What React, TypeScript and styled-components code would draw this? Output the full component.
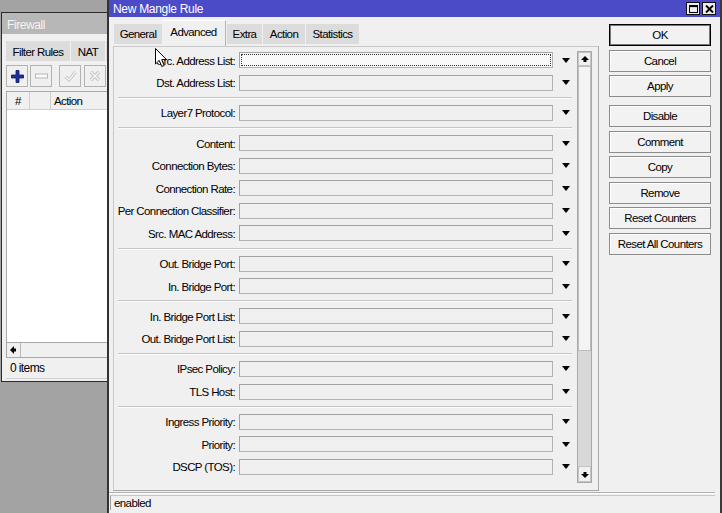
import React from 'react';
import styled, { createGlobalStyle } from 'styled-components';

const GlobalStyle = createGlobalStyle`
  html, body { margin: 0; padding: 0; }
  body {
    width: 722px; height: 513px; overflow: hidden; background: #a3a3a3;
    font-family: "Liberation Sans", Arial, sans-serif;
  }
  #root { width: 722px; height: 513px; }
`;

const Desktop = styled.div`
  position: relative;
  width: 722px;
  height: 513px;
  overflow: hidden;
  background: #a3a3a3;
  font-family: "Liberation Sans", Arial, sans-serif;
  font-size: 11.5px;
  letter-spacing: -0.6px;
  color: #000;
`;

/* ---------- Firewall (background window) ---------- */
const FwWindow = styled.div`
  position: absolute;
  left: 1px;
  top: 12px;
  width: 320px;
  height: 370px;
  box-sizing: border-box;
  border: 1px solid #2b2b2b;
  background: #f0f0f0;
  display: flex;
  flex-direction: column;
`;

const FwTitle = styled.div`
  height: 21px;
  box-sizing: border-box;
  padding: 2px 0 0 5px;
  background: #b7b7b7;
  color: #f4f4f4;
  font-size: 12px;
  letter-spacing: -0.4px;
  display: flex;
  align-items: center;
`;

const FwBody = styled.div`
  flex: 1;
  display: flex;
  flex-direction: column;
  padding: 7px 0 2px 4px;
`;

const FwTabs = styled.div`
  display: flex;
  gap: 1px;
  height: 20px;
`;

const FwTab = styled.div<{ $w: number }>`
  width: ${p => p.$w}px;
  box-sizing: border-box;
  padding-top: 1px;
  background: #dcdcdc;
  display: flex;
  align-items: center;
  justify-content: center;
  white-space: nowrap;
`;

const FwToolbar = styled.div`
  display: flex;
  margin-top: 4px;
  height: 22px;
`;

const ToolBtn = styled.div<{ $gap: number }>`
  width: 22px;
  height: 22px;
  box-sizing: border-box;
  margin-left: ${p => p.$gap}px;
  border: 1px solid #b3b3b3;
  background: #f0f0f0;
  display: flex;
  align-items: center;
  justify-content: center;
`;

const FwTable = styled.div`
  margin-top: 4px;
  flex: 1;
  display: flex;
  flex-direction: column;
  border: 1px solid #a8a8a8;
  border-right: none;
  border-bottom: none;
  background: #fff;
`;

const FwHeader = styled.div`
  height: 17px;
  display: flex;
  background: #f0f0f0;
  border-bottom: 1px solid #cfcfcf;
`;

const HeadCell = styled.div<{ $w?: number; $center?: boolean }>`
  ${p => (p.$w ? `width: ${p.$w}px;` : 'flex: 1;')}
  box-sizing: border-box;
  border-right: 1px solid #cfcfcf;
  display: flex;
  align-items: center;
  justify-content: ${p => (p.$center ? 'center' : 'flex-start')};
  padding-left: ${p => (p.$center ? 0 : 3)}px;
`;

const FwRows = styled.div`
  flex: 1;
  background: #fff;
`;

const HScroll = styled.div`
  height: 14px;
  display: flex;
  background: #f0f0f0;
  border-top: 1px solid #a8a8a8;
  border-bottom: 1px solid #a8a8a8;
`;

const HScrollBtn = styled.div`
  width: 14px;
  box-sizing: border-box;
  border-right: 1px solid #b8b8b8;
  display: flex;
  align-items: center;
  justify-content: center;
`;

const FwStatus = styled.div`
  height: 20px;
  display: flex;
  align-items: center;
  padding-left: 4px;
  font-size: 12px;
  border-bottom: 1px solid #d0d0d0;
`;

/* ---------- New Mangle Rule (front window) ---------- */
const MWindow = styled.div`
  position: absolute;
  left: 107px;
  top: 0;
  width: 615px;
  height: 513px;
  box-sizing: border-box;
  border-left: 2px solid #333;
  border-right: 2px solid #3a3a3a;
  background: #f0f0f0;
  display: flex;
  flex-direction: column;
  z-index: 2;
`;

const TitleBar = styled.div`
  height: 17px;
  flex: none;
  background: #4b4bc8;
  color: #fff;
  font-size: 12px;
  letter-spacing: -0.3px;
  display: flex;
  align-items: center;
  justify-content: space-between;
  padding-left: 4px;
`;

const TitleControls = styled.div`
  display: flex;
  gap: 2px;
  margin-right: 4px;
`;

const TitleCtl = styled.div`
  width: 14px;
  height: 13px;
  box-sizing: border-box;
  border: 1px solid #111;
  background: #ececec;
  display: flex;
  align-items: center;
  justify-content: center;
`;

const Body = styled.div`
  flex: 1;
  display: flex;
  gap: 10px;
  padding: 3px 9px 1px 4px;
  min-height: 0;
`;

const LeftCol = styled.div`
  width: 486px;
  display: flex;
  flex-direction: column;
`;

const TabBar = styled.div`
  height: 26px;
  flex: none;
  display: flex;
  align-items: flex-end;
  padding-left: 1px;
`;

const Tab = styled.div<{ $w: number; $active?: boolean }>`
  width: ${p => p.$w}px;
  box-sizing: border-box;
  margin-left: ${p => (p.$active ? 0 : 1)}px;
  height: ${p => (p.$active ? 26 : 20)}px;
  margin-bottom: ${p => (p.$active ? 0 : 2)}px;
  background: ${p => (p.$active ? '#f0f0f0' : '#dcdcdc')};
  border-top: ${p => (p.$active ? '1px solid #ffffff' : 'none')};
  border-right: ${p => (p.$active ? '1px solid #b4b4b4' : 'none')};
  display: flex;
  align-items: center;
  justify-content: center;
  padding-bottom: ${p => (p.$active ? 4 : 0)}px;
  white-space: nowrap;
  &:first-child { margin-left: 0; }
`;

const Panel = styled.div`
  flex: 1;
  display: flex;
  box-sizing: border-box;
  border: 1px solid #c9c9c9;
  border-right-color: #a7a7a7;
  border-bottom-color: #a7a7a7;
`;

const Form = styled.div`
  width: 463px;
  display: flex;
  flex-direction: column;
  padding-top: 2px;
`;

const Row = styled.div`
  height: 22.6px;
  flex: none;
  display: grid;
  grid-template-columns: 125px 314px 24px;
  align-items: center;
`;

const Label = styled.div`
  text-align: right;
  padding-right: 4px;
  padding-top: 1px;
  white-space: nowrap;
`;

const Field = styled.div<{ $focused?: boolean }>`
  height: 16px;
  box-sizing: border-box;
  border: 1px solid #b3b3b3;
  border-top-color: #a3a3a3;
  border-left-color: #a3a3a3;
  background: ${p => (p.$focused ? '#f9f9f9' : '#f0f0f0')};
  ${p => (p.$focused ? 'outline: 1px dotted #333; outline-offset: -3px;' : '')}
`;

const DropArrow = styled.div`
  justify-self: center;
  width: 0;
  height: 0;
  border-left: 4.5px solid transparent;
  border-right: 4.5px solid transparent;
  border-top: 5px solid #000;
  margin-left: 1px;
`;

const Separator = styled.div`
  height: 7.5px;
  flex: none;
  display: flex;
  align-items: center;
  padding: 0 5px 0 4px;
  &::after {
    content: '';
    flex: 1;
    border-top: 1px solid #c6c6c6;
    border-bottom: 1px solid #fbfbfb;
  }
`;

const VScroll = styled.div`
  width: 15px;
  height: 432px;
  margin: 4px 6px 0 0;
  box-sizing: border-box;
  border: 1px solid #a9a9a9;
  display: flex;
  flex-direction: column;
  background: #d6d6d6;
`;

const ScrollBtn = styled.div<{ $h: number }>`
  height: ${p => p.$h}px;
  flex: none;
  box-sizing: border-box;
  background: #f0f0f0;
  border: 1px solid #c4c4c4;
  display: flex;
  align-items: center;
  justify-content: center;
`;

const Thumb = styled.div`
  height: 285px;
  flex: none;
  box-sizing: border-box;
  background: #f4f4f4;
  border: 1px solid #bdbdbd;
`;

const Track = styled.div`
  flex: 1;
  background: #d8d8d8;
`;

const ButtonCol = styled.div`
  width: 102px;
  display: flex;
  flex-direction: column;
  gap: 3.5px;
  padding-top: 4px;
`;

const Btn = styled.div<{ $default?: boolean; $spaced?: boolean }>`
  height: 22px;
  flex: none;
  box-sizing: border-box;
  border: 1px solid ${p => (p.$default ? '#000' : '#8c8c8c')};
  box-shadow: ${p => (p.$default ? 'inset 0 0 0 1px #777' : 'inset 1px 1px 0 #fff')};
  background: #f2f2f2;
  display: flex;
  align-items: center;
  justify-content: center;
  white-space: nowrap;
  margin-top: ${p => (p.$spaced ? 4.5 : 0)}px;
`;

const StatusBar = styled.div`
  height: 21px;
  flex: none;
  box-sizing: border-box;
  margin-right: 5px;
  border-top: 1px solid #b0b0b0;
  box-shadow: inset 0 1px 0 #fdfdfd;
  padding: 2px 0 3px 1px;
  display: flex;
`;

const StatusCell = styled.div`
  flex: 1;
  border-left: 1px solid #9c9c9c;
  border-top: 1px solid #c8c8c8;
  display: flex;
  align-items: center;
  padding-left: 3px;
`;

const Cursor = styled.svg`
  position: absolute;
  left: 155px;
  top: 48px;
  z-index: 10;
`;

type Item = { label: string } | 'sep';

const items: Item[] = [
  { label: 'Src. Address List:' },
  { label: 'Dst. Address List:' },
  'sep',
  { label: 'Layer7 Protocol:' },
  'sep',
  { label: 'Content:' },
  { label: 'Connection Bytes:' },
  { label: 'Connection Rate:' },
  { label: 'Per Connection Classifier:' },
  { label: 'Src. MAC Address:' },
  'sep',
  { label: 'Out. Bridge Port:' },
  { label: 'In. Bridge Port:' },
  'sep',
  { label: 'In. Bridge Port List:' },
  { label: 'Out. Bridge Port List:' },
  'sep',
  { label: 'IPsec Policy:' },
  { label: 'TLS Host:' },
  'sep',
  { label: 'Ingress Priority:' },
  { label: 'Priority:' },
  { label: 'DSCP (TOS):' },
];

const tabs = [
  { name: 'General', w: 48 },
  { name: 'Advanced', w: 64, active: true },
  { name: 'Extra', w: 35 },
  { name: 'Action', w: 42 },
  { name: 'Statistics', w: 53 },
];

const buttons = [
  { name: 'OK', def: true },
  { name: 'Cancel' },
  { name: 'Apply' },
  { name: 'Disable', spaced: true },
  { name: 'Comment' },
  { name: 'Copy' },
  { name: 'Remove' },
  { name: 'Reset Counters' },
  { name: 'Reset All Counters' },
];

const UpArrow = () => (
  <svg width="8" height="7" viewBox="0 0 8 7">
    <path d="M4 0 L8 4 L5.5 4 L5.5 6 L2.5 6 L2.5 4 L0 4 Z" fill="#000" />
  </svg>
);

const DownArrow = () => (
  <svg width="8" height="7" viewBox="0 0 8 7">
    <path d="M4 7 L8 3 L5.5 3 L5.5 1 L2.5 1 L2.5 3 L0 3 Z" fill="#000" />
  </svg>
);

const LeftArrow = () => (
  <svg width="7" height="8" viewBox="0 0 7 8">
    <path d="M0 4 L4 0 L4 2.5 L6 2.5 L6 5.5 L4 5.5 L4 8 Z" fill="#000" />
  </svg>
);

export default function App() {
  return (
    <>
      <GlobalStyle />
      <Desktop>
        <FwWindow>
          <FwTitle>Firewall</FwTitle>
          <FwBody>
            <FwTabs>
              <FwTab $w={64}>Filter Rules</FwTab>
              <FwTab $w={34}>NAT</FwTab>
              <FwTab $w={50}>Mangle</FwTab>
            </FwTabs>
            <FwToolbar>
              <ToolBtn $gap={0}>
                <svg width="13" height="13" viewBox="0 0 13 13">
                  <path d="M5 0.5 H8 V5 H12.5 V8 H8 V12.5 H5 V8 H0.5 V5 H5 Z" fill="#1d2fa6" stroke="#0d1660" strokeWidth="0.8" />
                </svg>
              </ToolBtn>
              <ToolBtn $gap={2}>
                <svg width="13" height="6" viewBox="0 0 13 6">
                  <rect x="0.5" y="1" width="12" height="4" fill="#fafafa" stroke="#b6b6b6" />
                </svg>
              </ToolBtn>
              <ToolBtn $gap={7}>
                <svg width="13" height="12" viewBox="0 0 13 12">
                  <path d="M1.5 6.5 L5 10 L11.5 2" fill="none" stroke="#c2c2c2" strokeWidth="3" />
                  <path d="M1.5 6.5 L5 10 L11.5 2" fill="none" stroke="#f6f6f6" strokeWidth="1.2" />
                </svg>
              </ToolBtn>
              <ToolBtn $gap={3}>
                <svg width="12" height="12" viewBox="0 0 12 12">
                  <path d="M2 2 L10 10 M10 2 L2 10" fill="none" stroke="#c2c2c2" strokeWidth="3.4" />
                  <path d="M2 2 L10 10 M10 2 L2 10" fill="none" stroke="#f6f6f6" strokeWidth="1.4" />
                </svg>
              </ToolBtn>
            </FwToolbar>
            <FwTable>
              <FwHeader>
                <HeadCell $w={23} $center>#</HeadCell>
                <HeadCell $w={21} />
                <HeadCell>Action</HeadCell>
              </FwHeader>
              <FwRows />
              <HScroll>
                <HScrollBtn>
                  <LeftArrow />
                </HScrollBtn>
              </HScroll>
            </FwTable>
            <FwStatus>0 items</FwStatus>
          </FwBody>
        </FwWindow>

        <MWindow>
          <TitleBar>
            <span>New Mangle Rule</span>
            <TitleControls>
              <TitleCtl>
                <svg width="9" height="8" viewBox="0 0 9 8">
                  <rect x="0.5" y="0.5" width="8" height="7" fill="none" stroke="#000" />
                  <rect x="0.5" y="0.5" width="8" height="1.6" fill="#000" />
                </svg>
              </TitleCtl>
              <TitleCtl>
                <svg width="9" height="8" viewBox="0 0 9 8">
                  <path d="M1 0.5 L8 7.5 M8 0.5 L1 7.5" stroke="#000" strokeWidth="1.9" />
                </svg>
              </TitleCtl>
            </TitleControls>
          </TitleBar>
          <Body>
            <LeftCol>
              <TabBar>
                {tabs.map(t => (
                  <Tab key={t.name} $w={t.w} $active={t.active}>
                    {t.name}
                  </Tab>
                ))}
              </TabBar>
              <Panel>
                <Form>
                  {items.map((it, i) =>
                    it === 'sep' ? (
                      <Separator key={i} />
                    ) : (
                      <Row key={i}>
                        <Label>{it.label}</Label>
                        <Field $focused={i === 0} />
                        <DropArrow />
                      </Row>
                    )
                  )}
                </Form>
                <VScroll>
                  <ScrollBtn $h={14}>
                    <UpArrow />
                  </ScrollBtn>
                  <Thumb />
                  <Track />
                  <ScrollBtn $h={16}>
                    <DownArrow />
                  </ScrollBtn>
                </VScroll>
              </Panel>
            </LeftCol>
            <ButtonCol>
              {buttons.map(b => (
                <Btn key={b.name} $default={b.def} $spaced={b.spaced}>
                  {b.name}
                </Btn>
              ))}
            </ButtonCol>
          </Body>
          <StatusBar>
            <StatusCell>enabled</StatusCell>
          </StatusBar>
        </MWindow>

        <Cursor width="13" height="20" viewBox="0 0 13 20">
          <path d="M0.5 0.5 L0.5 16 L4.2 12.4 L6.8 18.5 L9.2 17.5 L6.7 11.6 L11.5 11.6 Z" fill="#fff" stroke="#000" strokeWidth="1" strokeLinejoin="miter" />
        </Cursor>
      </Desktop>
    </>
  );
}
